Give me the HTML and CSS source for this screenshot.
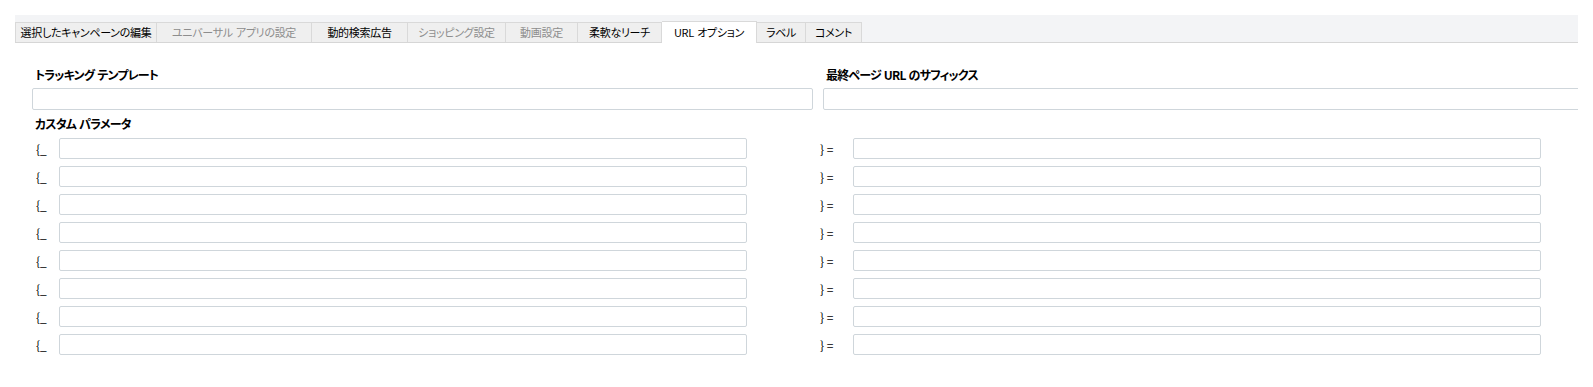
FILE: index.html
```html
<!DOCTYPE html>
<html lang="ja">
<head>
    <meta charset="UTF-8">
    <title>URL オプション</title>
    <link rel="stylesheet" href="styles.css">
</head>
<body>
    <div class="tabs">
        <div class="tab">選択したキャンペーンの編集</div>
        <div class="tab disabled">ユニバーサル アプリの設定</div>
        <div class="tab">動的検索広告</div>
        <div class="tab disabled">ショッピング設定</div>
        <div class="tab disabled">動画設定</div>
        <div class="tab">柔軟なリーチ</div>
        <div class="tab active">URL オプション</div>
        <div class="tab">ラベル</div>
        <div class="tab">コメント</div>
    </div>

    <div class="panel">
        <div class="top-fields">
            <div class="field">
                <label>トラッキング テンプレート</label>
                <input type="text">
            </div>
            <div class="field">
                <label>最終ページ URL のサフィックス</label>
                <input type="text">
            </div>
        </div>

        <label class="params-title">カスタム パラメータ</label>
        <div class="params" id="params"></div>
    </div>

    <script>
        const params = document.getElementById('params');
        for (let i = 0; i < 8; i++) {
            params.innerHTML += `
                <span class="open">{_</span>
                <input type="text">
                <span class="close">} =</span>
                <input type="text">
            `;
        }
    </script>
</body>
</html>
```

FILE: styles.css
```css
body {
    margin: 0;
    font-family: "Noto Sans CJK JP", sans-serif;
    font-size: 12px;
    color: #000;
    background: #fff;
    font-feature-settings: "palt";
}
.tabs {
    margin: 15px 0 0 15px;
    width: 1563px;
    height: 27px;
    background-color: #f3f4f6;
    border-bottom: 1px solid #d6d6d6;
    display: flex;
    align-items: flex-end;
}
.tab {
    box-sizing: border-box;
    height: 20px;
    line-height: 19px;
    text-align: center;
    font-size: 11px;
    letter-spacing: -0.3px;
    word-spacing: 1px;
    background-color: #efefef;
    border: 1px solid #d9d9d9;
    border-bottom: none;
    border-left: none;
    white-space: nowrap;
}
.tab:nth-child(1) { width: 142px; border-left: 1px solid #d9d9d9; }
.tab:nth-child(2) { width: 155px; }
.tab:nth-child(3) { width: 96px; }
.tab:nth-child(4) { width: 98px; }
.tab:nth-child(5) { width: 72px; }
.tab:nth-child(6) { width: 84px; }
.tab:nth-child(7) { width: 95px; }
.tab:nth-child(8) { width: 49px; }
.tab:nth-child(9) { width: 56px; }
.tab.disabled {
    color: #8d8d8d;
}
.tab.active {
    background-color: #fff;
    height: 22px;
    line-height: 21px;
    margin-bottom: -1px;
}
.panel {
    margin-left: 15px;
    width: 1563px;
    overflow: hidden;
}
.top-fields {
    display: flex;
    gap: 10px;
    margin: 24px 0 0 17px;
}
.field {
    flex: 0 0 781px;
}
.field label,
.params-title {
    display: block;
    font-weight: bold;
    letter-spacing: -0.8px;
    word-spacing: 1px;
    height: 16px;
    line-height: 16px;
    padding-left: 3px;
    margin-bottom: 5px;
}
.field input {
    display: block;
    width: 100%;
}
input {
    box-sizing: border-box;
    height: 22px;
    border: 1px solid #cfd6db;
    border-radius: 2px;
    margin: 0;
    padding: 0 4px;
    font: inherit;
}
.params-title {
    margin: 6px 0 6px 17px;
}
.params {
    display: grid;
    grid-template-columns: 44px 688px 106px 688px;
    grid-auto-rows: 28px;
    align-items: start;
}
.params input {
    width: 100%;
    height: 21px;
}
.open {
    padding-left: 21px;
    line-height: 22px;
}
.close {
    padding-left: 73px;
    line-height: 22px;
}
```
